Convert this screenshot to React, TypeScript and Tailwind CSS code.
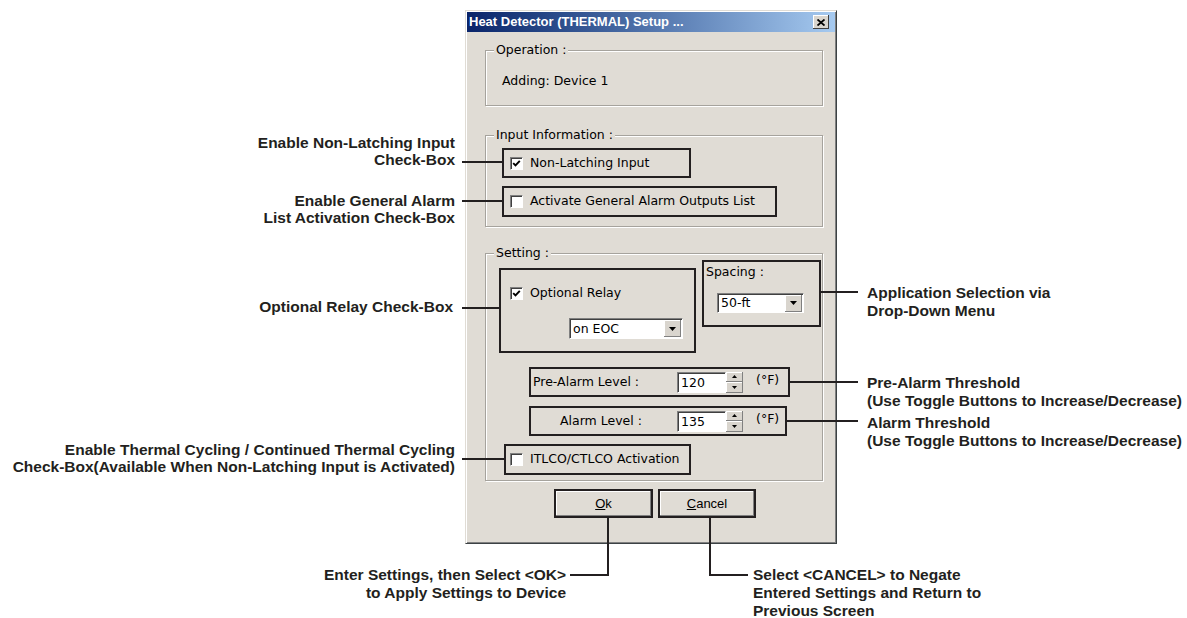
import React from "react";

const ink = "bg-[#231f20]";

function Check({ checked }: { checked?: boolean }) {
  return (
    <span className="flex items-center justify-center w-[13px] h-[13px] shrink-0 bg-white border border-t-[#808080] border-l-[#808080] border-r-white border-b-white shadow-[inset_1px_1px_0_#404040]">
      {checked && (
        <svg width="9" height="9" viewBox="0 0 9 9">
          <path d="M1.2 4.2 L3.5 6.5 L7.8 1.8" stroke="#000" strokeWidth="1.9" fill="none" />
        </svg>
      )}
    </span>
  );
}

function Arrow({ small }: { small?: boolean }) {
  return small ? (
    <svg width="5" height="3" viewBox="0 0 5 3">
      <path d="M0 0 H5 L2.5 3 Z" fill="#000" />
    </svg>
  ) : (
    <svg width="7" height="4" viewBox="0 0 7 4">
      <path d="M0 0 H7 L3.5 4 Z" fill="#000" />
    </svg>
  );
}

function Dropdown({ value, className }: { value: string; className: string }) {
  return (
    <div className={"flex items-center bg-white border border-t-[#808080] border-l-[#808080] border-r-white border-b-white shadow-[inset_1px_1px_0_#404040] " + className}>
      <span className="flex-1 pl-[3px] leading-[14px]">{value}</span>
      <span className="flex items-center justify-center w-[17px] h-[17px] mr-[1px] bg-[#d9d5ce] shadow-[inset_-1px_-1px_0_#808080,inset_1px_1px_0_#fff]">
        <Arrow />
      </span>
    </div>
  );
}

function Spin({ value }: { value: string }) {
  return (
    <div className="flex h-[21px]">
      <div className="w-[49px] flex items-center bg-white border border-t-[#808080] border-l-[#808080] border-r-white border-b-white shadow-[inset_1px_1px_0_#404040]">
        <span className="pl-[3px] pt-[2px] leading-[14px]">{value}</span>
      </div>
      <div className="w-[17px] flex flex-col">
        <span className="flex-1 flex items-center justify-center bg-[#d9d5ce] shadow-[inset_-1px_-1px_0_#808080,inset_1px_1px_0_#fff]">
          <span className="rotate-180 flex"><Arrow small /></span>
        </span>
        <span className="flex-1 flex items-center justify-center bg-[#d9d5ce] shadow-[inset_-1px_-1px_0_#808080,inset_1px_1px_0_#fff]">
          <Arrow small />
        </span>
      </div>
    </div>
  );
}

function Group({ label, className, children }: { label: string; className: string; children?: React.ReactNode }) {
  return (
    <div className={"relative w-[338px] border border-[#a6a39d] shadow-[1px_1px_0_#fff,inset_1px_1px_0_#fff] " + className}>
      <span className="absolute -top-[8px] left-[8px] px-[2px] bg-[#e0dcd5] leading-[14px]">{label}</span>
      {children}
    </div>
  );
}

const frame = "border-2 border-[#231f20]";

function Dialog() {
  return (
    <div className="w-[372px] h-[534px] p-[1px] bg-[#e0dcd5] border border-t-[#e0dcd5] border-l-[#e0dcd5] border-r-[#3c4244] border-b-[#3c4244] shadow-[inset_1px_1px_0_#fff,inset_-1px_-1px_0_#808080] font-['DejaVu_Sans',sans-serif] text-[12.5px] text-black">
      {/* title bar */}
      <div className="h-[20px] flex items-center justify-between bg-linear-to-r from-[#0a246a] to-[#a6caf0]">
        <span className="pl-[2px] text-white font-bold text-[13px] font-['Liberation_Sans',Arial,sans-serif]">
          Heat Detector (THERMAL) Setup ...
        </span>
        <span className="mr-[6px] w-[16px] h-[14px] flex items-center justify-center bg-[#d9d5ce] shadow-[inset_-1px_-1px_0_#404040,inset_1px_1px_0_#fff]">
          <svg width="8" height="7" viewBox="0 0 8 7">
            <path d="M0.5 0.5 L7.5 6.5 M7.5 0.5 L0.5 6.5" stroke="#000" strokeWidth="1.8" />
          </svg>
        </span>
      </div>

      <div className="pl-[18px]">
        <Group label="Operation :" className="mt-[18px] h-[56px] pl-[16px] pt-[23px]">
          <div className="leading-[14px]">Adding: Device 1</div>
        </Group>

        <Group label="Input Information :" className="mt-[29px] h-[92px] pl-[16px] pt-[12px]">
          <div className={frame + " w-[189px] h-[30px] flex items-center pl-[6px] gap-[7px]"}>
            <Check checked />
            <span>Non-Latching Input</span>
          </div>
          <div className={frame + " mt-[8px] w-[275px] h-[31px] flex items-center pl-[6px] gap-[7px]"}>
            <Check />
            <span>Activate General Alarm Outputs List</span>
          </div>
        </Group>

        <Group label="Setting :" className="mt-[26px] h-[228px]">
          <div className="flex items-start">
            <div className={frame + " ml-[13px] mt-[14px] w-[197px] h-[85px]"}>
              <div className="ml-[9px] mt-[15px] h-[17px] flex items-center gap-[7px]">
                <Check checked />
                <span>Optional Relay</span>
              </div>
              <Dropdown value="on EOC" className="ml-[68px] mt-[16px] w-[114px] h-[21px]" />
            </div>
            <div className={frame + " ml-[6px] mt-[6px] w-[119px] h-[67px] pl-[2px] pt-[3px]"}>
              <div className="leading-[14px]">Spacing :</div>
              <Dropdown value="50-ft" className="ml-[11px] mt-[14px] w-[87px] h-[20px]" />
            </div>
          </div>

          <div className={frame + " ml-[43px] mt-[14px] w-[261px] h-[30px] flex items-center"}>
            <span className="w-[146px] pl-[2px]">Pre-Alarm Level :</span>
            <Spin value="120" />
            <span className="ml-[13px] mb-[4px]">(°F)</span>
          </div>
          <div className={frame + " ml-[43px] mt-[9px] w-[258px] h-[30px] flex items-center"}>
            <span className="w-[146px] pl-[29px]">Alarm Level :</span>
            <Spin value="135" />
            <span className="ml-[13px] mb-[4px]">(°F)</span>
          </div>
          <div className={frame + " ml-[18px] mt-[8px] w-[187px] h-[31px] flex items-center pl-[4px] gap-[7px]"}>
            <Check />
            <span>ITLCO/CTLCO Activation</span>
          </div>
        </Group>

        <div className="ml-[69px] mt-[8px] flex gap-[5px] font-['Liberation_Sans',Arial,sans-serif] text-[13px]">
          <button className={frame + " w-[99px] h-[29px] bg-[#e0dcd5] shadow-[inset_-1px_-1px_0_#808080,inset_1px_1px_0_#fff]"}>
            <span className="underline">O</span>k
          </button>
          <button className={frame + " w-[98px] h-[29px] bg-[#e0dcd5] shadow-[inset_-1px_-1px_0_#808080,inset_1px_1px_0_#fff]"}>
            <span className="underline">C</span>ancel
          </button>
        </div>
      </div>
    </div>
  );
}

export default function App() {
  const note = "absolute font-['Liberation_Sans',Arial,sans-serif] font-bold text-[15.5px] text-[#231f20] whitespace-nowrap";
  return (
    <div className="relative w-[1187px] h-[618px] bg-white overflow-hidden">
      <div className="pl-[465px] pt-[10px]">
        <Dialog />
      </div>

      {/* left callouts */}
      <div className={note + " right-[732px] top-[134px] leading-[17px] text-right"}>
        Enable Non-Latching Input<br />Check-Box
      </div>
      <div className={`absolute ${ink} left-[462px] top-[161px] w-[40px] h-[2px]`} />

      <div className={note + " right-[732px] top-[192px] leading-[17px] text-right"}>
        Enable General Alarm<br />List Activation Check-Box
      </div>
      <div className={`absolute ${ink} left-[462px] top-[200px] w-[40px] h-[2px]`} />

      <div className={note + " right-[734px] top-[298px] leading-[17px] text-right"}>
        Optional Relay Check-Box
      </div>
      <div className={`absolute ${ink} left-[462px] top-[307px] w-[37px] h-[2px]`} />

      <div className={note + " right-[732px] top-[441px] leading-[17px] text-right"}>
        Enable Thermal Cycling / Continued Thermal Cycling<br />
        Check-Box(Available When Non-Latching Input is Activated)
      </div>
      <div className={`absolute ${ink} left-[462px] top-[458px] w-[42px] h-[2px]`} />

      {/* right callouts */}
      <div className={`absolute ${ink} left-[821px] top-[291px] w-[37px] h-[2px]`} />
      <div className={note + " left-[867px] top-[284px] leading-[18px]"}>
        Application Selection via<br />Drop-Down Menu
      </div>

      <div className={`absolute ${ink} left-[790px] top-[381px] w-[68px] h-[2px]`} />
      <div className={note + " left-[867px] top-[374px] leading-[18px]"}>
        Pre-Alarm Threshold<br />(Use Toggle Buttons to Increase/Decrease)
      </div>

      <div className={`absolute ${ink} left-[787px] top-[420px] w-[71px] h-[2px]`} />
      <div className={note + " left-[867px] top-[414px] leading-[18px]"}>
        Alarm Threshold<br />(Use Toggle Buttons to Increase/Decrease)
      </div>

      {/* bottom callouts */}
      <div className={`absolute ${ink} left-[607px] top-[518px] w-[2px] h-[58px]`} />
      <div className={`absolute ${ink} left-[570px] top-[574px] w-[39px] h-[2px]`} />
      <div className={note + " right-[621px] top-[566px] leading-[18px] text-right"}>
        Enter Settings, then Select &lt;OK&gt;<br />to Apply Settings to Device
      </div>

      <div className={`absolute ${ink} left-[709px] top-[518px] w-[2px] h-[58px]`} />
      <div className={`absolute ${ink} left-[709px] top-[574px] w-[39px] h-[2px]`} />
      <div className={note + " left-[753px] top-[566px] leading-[18px]"}>
        Select &lt;CANCEL&gt; to Negate<br />Entered Settings and Return to<br />Previous Screen
      </div>
    </div>
  );
}
